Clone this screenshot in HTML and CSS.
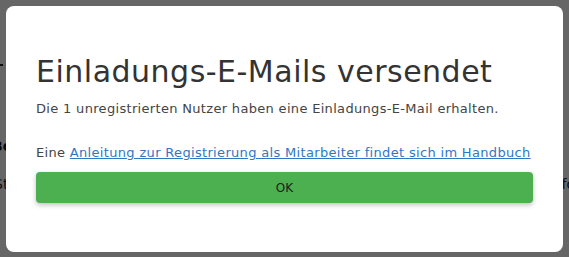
FILE: index.html
```html
<!DOCTYPE html>
<html lang="de">
<head>
<meta charset="utf-8">
<link rel="stylesheet" href="styles.css">
</head>
<body>
<div class="page">
  <div class="page-rule"></div>
  <div class="page-head">Benutzer verwalten</div>
  <div class="page-row"><span>Status</span><span class="page-link">Einladung</span><span>Info</span></div>
</div>
<div class="overlay">
  <div class="modal">
    <h1 class="modal-title">Einladungs-E-Mails versendet</h1>
    <p class="modal-text">Die 1 unregistrierten Nutzer haben eine Einladungs-E-Mail erhalten.</p>
    <p class="modal-text modal-hint">Eine <a href="#" class="modal-link">Anleitung zur Registrierung als Mitarbeiter findet sich im Handbuch</a></p>
    <button class="modal-btn">OK</button>
  </div>
</div>
</body>
</html>
```
FILE: styles.css
```css
html, body {
  margin: 0;
  padding: 0;
  width: 569px;
  height: 257px;
  overflow: hidden;
  background: #fff;
  font-family: "DejaVu Sans", "Open Sans", sans-serif;
}
.page {
  padding: 64px 0 0 0;
}
.page-rule {
  width: 569px;
  height: 2px;
  background: #222;
  margin-left: -566px;
}
.page-head {
  margin-top: 72px;
  margin-left: -8px;
  font-weight: bold;
  font-size: 14px;
  color: #111;
}
.page-row {
  display: flex;
  justify-content: space-between;
  margin-top: 22px;
  margin-left: -6px;
  margin-right: -6px;
  font-size: 14px;
  color: #223;
}
.overlay {
  position: fixed;
  inset: 0;
  background: rgba(0, 0, 0, 0.6);
}
.modal {
  position: absolute;
  left: 6px;
  top: 6px;
  width: 557px;
  height: 246px;
  box-sizing: border-box;
  background: #fff;
  border-radius: 8px;
  padding: 48px 30px 30px;
  display: flex;
  flex-direction: column;
}
.modal-title {
  margin: 0;
  font-size: 30px;
  line-height: 36px;
  font-weight: 400;
  letter-spacing: 0.5px;
  color: #333;
}
.modal-text {
  margin: 9px 0 0;
  font-size: 13px;
  line-height: 20px;
  letter-spacing: 0.32px;
  color: #444;
  white-space: nowrap;
}
.modal-hint {
  margin-top: 24px;
}
.modal-link {
  color: #2f77c4;
  text-decoration: underline;
  letter-spacing: 0.33px;
}
.modal-btn {
  margin-top: 9px;
  height: 31px;
  border: none;
  border-radius: 4px;
  background: #4caf50;
  color: #1d1d1d;
  font-family: inherit;
  font-size: 12px;
  box-shadow: 0 2px 5px rgba(0, 0, 0, 0.25);
  padding: 0;
}
```
